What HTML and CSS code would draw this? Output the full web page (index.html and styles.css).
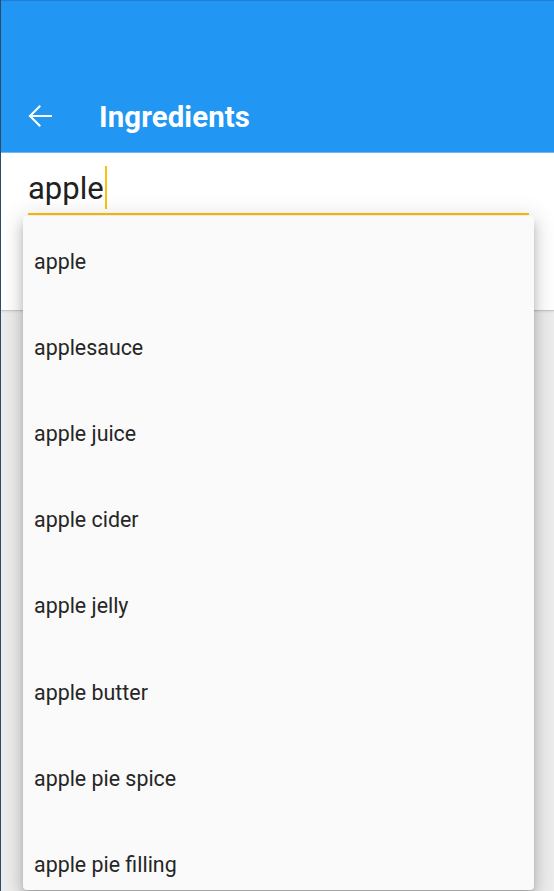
FILE: index.html
```html
<!DOCTYPE html>
<html lang="en">
<head>
<meta charset="utf-8">
<title>Ingredients</title>
<link rel="stylesheet" href="styles.css">
</head>
<body>
<div class="screen">
  <header class="appbar">
    <div class="toolbar">
      <svg class="back" width="24" height="22" viewBox="0 0 24 22" aria-hidden="true">
        <path d="M2 11H23M11.5 1.5L2 11L11.5 20.5" fill="none" stroke="#fff" stroke-width="2.1" stroke-linecap="square"/>
      </svg>
      <h1 class="title">Ingredients</h1>
    </div>
  </header>
  <section class="search-panel">
    <div class="field">
      <span class="field-text">apple</span><span class="caret"></span>
    </div>
  </section>
  <ul class="suggestions">
    <li class="suggestion">apple</li>
    <li class="suggestion">applesauce</li>
    <li class="suggestion">apple juice</li>
    <li class="suggestion">apple cider</li>
    <li class="suggestion">apple jelly</li>
    <li class="suggestion">apple butter</li>
    <li class="suggestion">apple pie spice</li>
    <li class="suggestion">apple pie filling</li>
  </ul>
</div>
</body>
</html>
```

FILE: styles.css
```css
* { box-sizing: border-box; }

html, body {
  margin: 0;
  padding: 0;
}

body {
  background: #ebebeb;
  font-family: Roboto, "Noto Sans", "Liberation Sans", sans-serif;
}

.screen {
  position: relative;
  width: 554px;
  height: 891px;
  overflow: hidden;
  background: #ededed;
  border-left: 1px solid #2e4b66;
}

.appbar {
  background: #2196f3;
  border-top: 1px solid #1c7fd6;
  border-bottom: 1px solid #6fbaf7;
  padding: 87px 0 8px 0;
}

.toolbar {
  height: 56px;
  display: flex;
  align-items: center;
  padding-left: 27px;
}

.back {
  display: block;
  flex: none;
}

.title {
  margin: 3px 0 0 47px;
  color: #fff;
  font-size: 29.4px;
  font-weight: 700;
  line-height: 1;
  letter-spacing: 0.1px;
}

.search-panel {
  background: #fff;
  height: 158px;
  padding: 13px 25px 0 27px;
  border-bottom: 1px solid #c9c9c9;
  box-shadow: 0 1px 2px rgba(0,0,0,0.08);
}

.field {
  display: flex;
  align-items: flex-end;
  padding-bottom: 4px;
  border-bottom: 2px solid #ffc107;
}

.field-text {
  font-size: 31px;
  line-height: 40px;
  color: #212121;
}

.caret {
  width: 2px;
  height: 43px;
  margin-left: 1px;
  background: #ffc107;
}

.suggestions {
  position: absolute;
  top: 216px;
  left: 22px;
  width: 511px;
  height: 674px;
  margin: 0;
  padding: 2px 0 0 0;
  list-style: none;
  overflow: hidden;
  background: #fafafa;
  border-radius: 4px;
  box-shadow: 0 5px 6px -3px rgba(0,0,0,0.2),
              0 8px 12px 1px rgba(0,0,0,0.14),
              0 3px 22px 4px rgba(0,0,0,0.12);
}

.suggestion {
  height: 86.2px;
  display: flex;
  align-items: center;
  padding-left: 11px;
  font-size: 21.4px;
  color: #262626;
}
```
